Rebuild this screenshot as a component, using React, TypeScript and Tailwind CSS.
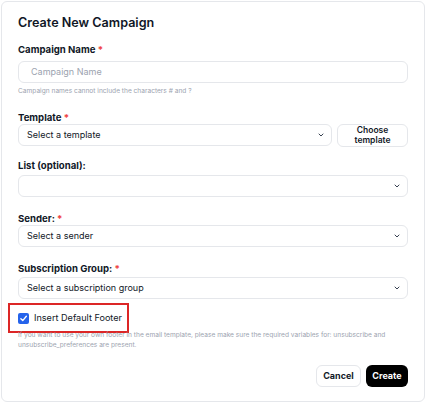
import { ChevronDown } from "lucide-react";

function Label({ text, required, className }: { text: string; required?: boolean; className?: string }) {
  return (
    <div className={`text-[9.6px] font-bold leading-[12px] text-[#111827] ${className ?? ""}`}>
      {text}
      {required && <span className="text-[#ef4444]"> *</span>}
    </div>
  );
}

function FakeSelect({ value, className }: { value: string; className?: string }) {
  return (
    <div
      className={`flex h-[22px] items-center justify-between rounded-[6px] border border-[#e5e7eb] bg-white pl-[8px] pr-[6px] text-[9px] text-[#111827] ${className ?? ""}`}
    >
      <span>{value}</span>
      <ChevronDown className="h-[8px] w-[8px] text-[#374151]" strokeWidth={3} />
    </div>
  );
}

export default function App() {
  return (
    <div className="min-h-[405px] bg-white p-px" style={{ fontFamily: "Inter, 'Liberation Sans', sans-serif" }}>
      <div className="h-[401px] w-[424px] rounded-[6px] border border-[#e5e7eb] bg-white px-[16px] pt-[13px]">
        <h1 className="text-[12.6px] font-semibold leading-[16px] text-[#111827]">Create New Campaign</h1>

        <Label text="Campaign Name" required className="mt-[13px]" />
        <div className="mt-[5px] flex h-[22px] items-center rounded-[6px] border border-[#e5e7eb] px-[12px] text-[9px] text-[#9ca3af]">
          Campaign Name
        </div>
        <div className="mt-[3px] whitespace-nowrap text-[6.6px] leading-[10px] text-[#9ca3af]">
          Campaign names cannot include the characters # and ?
        </div>

        <Label text="Template" required className="mt-[16px]" />
        <div className="flex gap-[5px]">
          <FakeSelect value="Select a template" className="flex-1" />
          <button className="flex h-[23px] w-[71px] flex-col items-center justify-center rounded-[6px] border border-[#e5e7eb] bg-white text-[8.5px] font-semibold leading-[9.5px] text-[#111827]">
            <span>Choose</span>
            <span>template</span>
          </button>
        </div>

        <Label text="List (optional):" className="mt-[13px]" />
        <FakeSelect value="" className="mt-[3px]" />

        <Label text="Sender:" required className="mt-[16px]" />
        <FakeSelect value="Select a sender" />

        <Label text="Subscription Group:" required className="mt-[16px]" />
        <FakeSelect value="Select a subscription group" className="mt-[2px]" />

        <div className="ml-[-10px] mt-[4px] flex h-[30px] w-[121px] items-center gap-[5px] border-2 border-[#dc2626] pl-[8px]">
          <span className="flex h-[11px] w-[11px] shrink-0 items-center justify-center rounded-[2px] bg-[#2563eb]">
            <svg viewBox="0 0 12 12" className="h-[9px] w-[9px]">
              <path d="M2.5 6.3 L5 8.8 L9.8 3" fill="none" stroke="white" strokeWidth="1.8" strokeLinecap="round" strokeLinejoin="round" />
            </svg>
          </span>
          <span className="whitespace-nowrap text-[9.1px] leading-[12px] text-[#111827]">Insert Default Footer</span>
        </div>
        <div className="mt-[-3px] whitespace-nowrap text-[6.6px] leading-[10px] text-[#9ca3af]">
          If you want to use your own footer in the email template, please make sure the required variables for: unsubscribe and
          <br />
          unsubscribe_preferences are present.
        </div>

        <div className="mt-[15px] flex justify-end gap-[5px]">
          <button className="h-[22px] w-[45px] rounded-[6px] border border-[#e5e7eb] bg-white text-[9px] font-bold text-[#111827]">
            Cancel
          </button>
          <button className="h-[22px] w-[42px] rounded-[6px] bg-black text-[9px] font-bold text-white">
            Create
          </button>
        </div>
      </div>
    </div>
  );
}
